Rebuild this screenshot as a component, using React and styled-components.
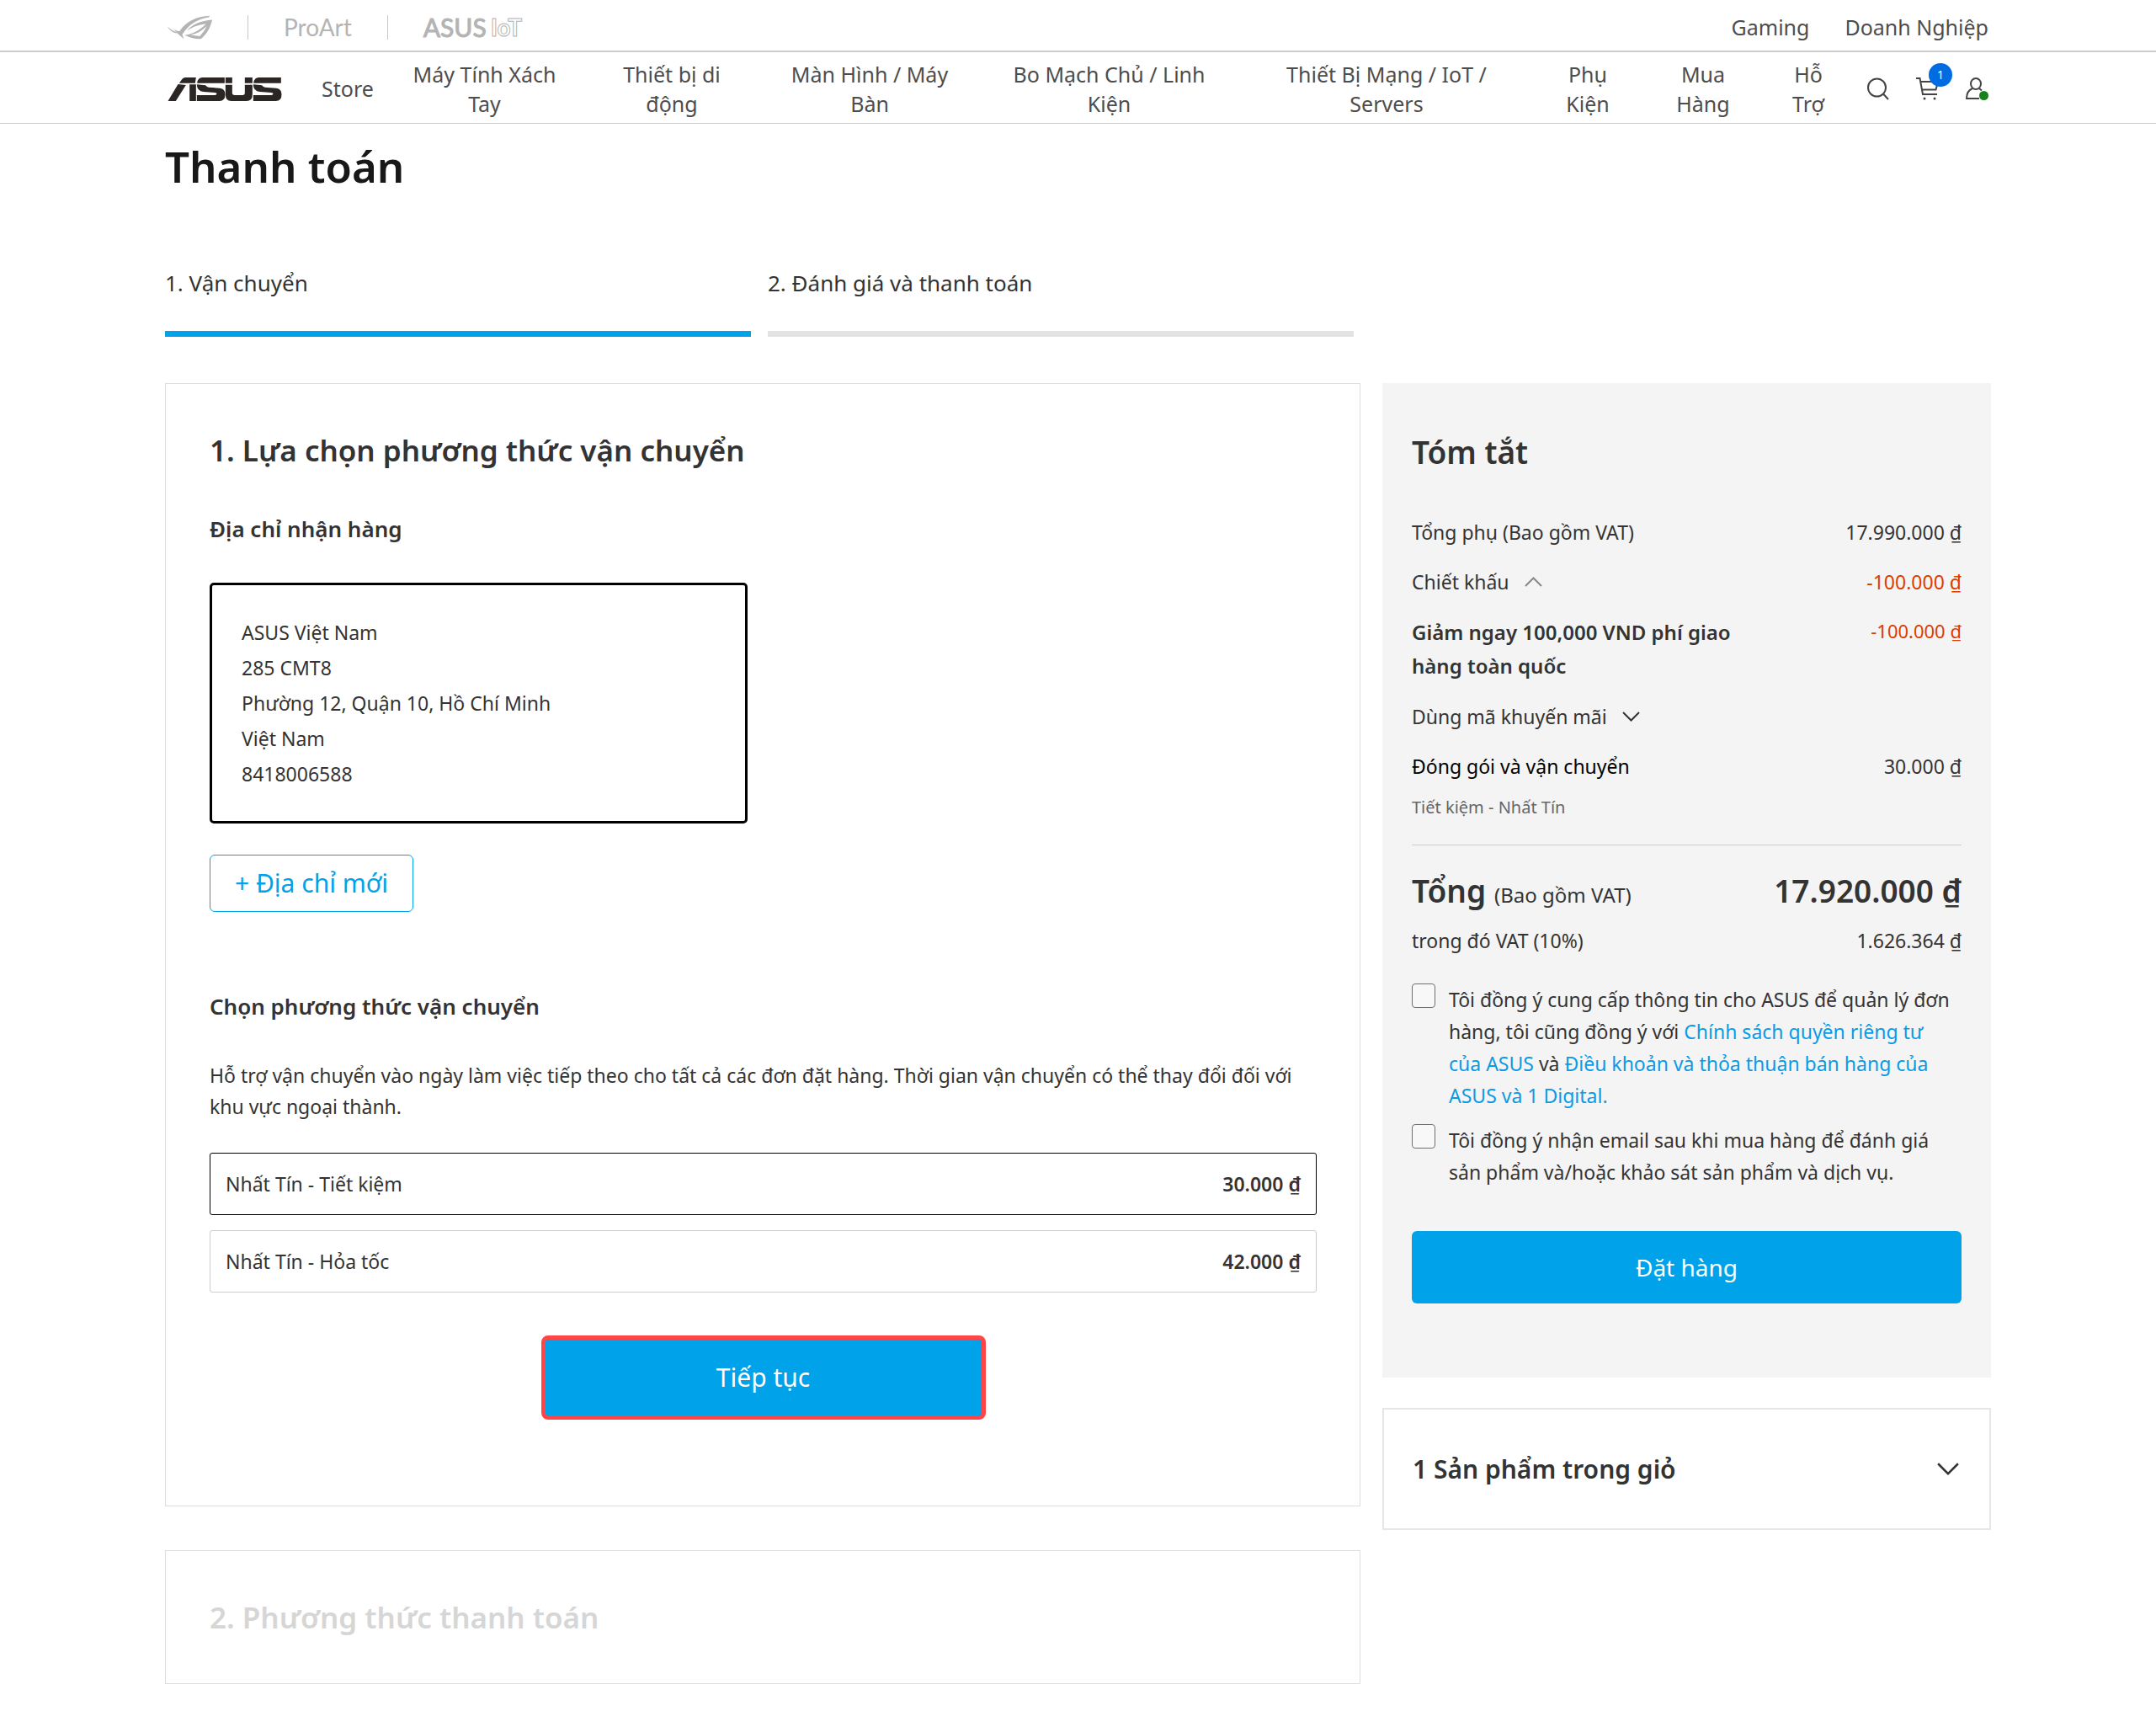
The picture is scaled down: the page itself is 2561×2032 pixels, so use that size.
import React, { useState } from "react";
import styled, { createGlobalStyle } from "styled-components";

const Global = createGlobalStyle`
  *, *::before, *::after { box-sizing: border-box; }
  body { margin: 0; background: #fff; color: #333; font: 400 23px/38px "Noto Sans", "Open Sans", sans-serif; }
  h1, h2, h3, p { margin: 0; font-weight: 600; }
  button, input { font: inherit; color: inherit; margin: 0; }
  button { cursor: pointer; }
  a { text-decoration: none; color: inherit; }
`;

const Inner = styled.div`
  margin: 0 196px;
`;

/* ---------- header ---------- */

const TopBar = styled.div`
  border-bottom: 2px solid #ccc;
`;

const TopRow = styled(Inner)`
  display: flex;
  align-items: center;
  justify-content: space-between;
  height: 60px;
  padding: 4px 3px 0;
`;

const Brands = styled.div`
  display: flex;
  align-items: center;
  gap: 42px;
  color: #b4b4b4;
`;

const BrandLink = styled.a`
  display: flex;
  align-items: center;
  gap: 5px;
  font: 400 ${(p) => p.$size || 28}px/36px Lato, "Noto Sans", sans-serif;
  -webkit-text-stroke: ${(p) => (p.$heavy ? "1px #b4b4b4" : "0")};
`;

const Outlined = styled.span`
  font-size: 28px;
  font-weight: 700;
  color: #fff;
`;

const BrandRule = styled.span`
  width: 1px;
  height: 29px;
  background: #c8c8c8;
`;

const TopLinks = styled.nav`
  display: flex;
  gap: 42px;
  font-size: 25px;
  color: #4d4d4d;
`;

const NavBar = styled.header`
  border-bottom: 1px solid #ccc;
`;

const NavRow = styled(Inner)`
  display: flex;
  align-items: center;
  height: 84px;
  padding: 3px 3px 0;
`;

const NavGrid = styled.nav`
  flex: 1;
  display: grid;
  grid-template-columns: 108fr 217fr 228fr 242fr 327fr 332fr 146fr 128fr 122fr;
  align-items: center;
  margin: 0 9px 0 23px;
`;

const NavLink = styled.a`
  font-size: 25px;
  line-height: 35px;
  text-align: center;
  white-space: pre-line;
  color: #4d4d4d;
`;

const Tools = styled.div`
  display: flex;
  gap: 32px;
  color: #444;
`;

const ToolButton = styled.button`
  position: relative;
  display: flex;
  padding: 0;
  border: 0;
  background: none;
`;

const Badge = styled.span`
  position: absolute;
  top: -17px;
  right: -16px;
  width: 28px;
  height: 28px;
  border-radius: 50%;
  background: #006ce1;
  color: #fff;
  font-size: 14px;
  line-height: 28px;
  text-align: center;
`;

const Online = styled.span`
  position: absolute;
  right: 0;
  bottom: 0;
  width: 11px;
  height: 11px;
  border-radius: 50%;
  background: #17811b;
`;

/* ---------- page ---------- */

const Title = styled.h1`
  padding-top: 14px;
  font-size: 51px;
  line-height: 72px;
  color: #181818;
`;

const Columns = styled.div`
  display: grid;
  grid-template-columns: 1420fr 723fr;
  gap: 26px;
  align-items: start;
`;

const Steps = styled.ol`
  display: grid;
  grid-template-columns: 1fr 1fr;
  gap: 20px;
  list-style: none;
  margin: 83px 8px 55px 0;
  padding: 0;
`;

const Step = styled.li`
  padding-bottom: 37px;
  border-bottom: 7px solid ${(p) => (p.$active ? "#00a2e9" : "#e3e3e3")};
  font-size: 26px;
  line-height: 40px;
`;

const Panel = styled.section`
  border: 1px solid #ddd;
  padding: 53px 51px ${(p) => (p.$muted ? 52 : 102)}px 52px;
  margin-bottom: 52px;
`;

const PanelTitle = styled.h2`
  font-size: ${(p) => (p.$large ? 37 : 35)}px;
  line-height: 52px;
  color: ${(p) => (p.$muted ? "#d6d6d6" : "#333")};
`;

const SubTitle = styled.h3`
  margin: ${(p) => p.$top}px 0 44px;
  font-size: 26px;
  line-height: 40px;
`;

const AddressCard = styled.address`
  width: 639px;
  max-width: 100%;
  padding: 35px;
  border: 3px solid #000;
  border-radius: 5px;
  font-style: normal;
  line-height: 42px;
`;

const OutlineButton = styled.button`
  display: block;
  height: 68px;
  margin-top: 37px;
  padding: 0 29px;
  border: 1px solid #00a2e9;
  border-radius: 6px;
  background: #fff;
  color: #00a2e9;
  font-size: 30px;
`;

const Note = styled.p`
  font-weight: 400;
  line-height: 37px;
`;

const Options = styled.div`
  display: grid;
  gap: 18px;
  margin: 36px 0 51px;
`;

const Option = styled.label`
  display: flex;
  align-items: center;
  justify-content: space-between;
  height: 74px;
  padding: 0 18px;
  border: 1px solid #ccc;
  border-radius: 3px;
  cursor: pointer;
  &:has(input:checked) { border-color: #000; }
`;

const HiddenRadio = styled.input`
  appearance: none;
  position: absolute;
  width: 1px;
  height: 1px;
  opacity: 0;
`;

const Strong = styled.strong`
  font-weight: 600;
`;

const PrimaryButton = styled.button`
  display: block;
  width: ${(p) => p.$width || "100%"};
  height: ${(p) => (p.$marked ? 100 : 86)}px;
  margin: 0 auto;
  border: ${(p) => (p.$marked ? "5px solid #ff4545" : "0")};
  border-radius: ${(p) => (p.$marked ? 8 : 6)}px;
  background: #00a2e9;
  color: #fff;
  font-size: ${(p) => (p.$marked ? 30 : 28)}px;
`;

/* ---------- summary ---------- */

const Summary = styled.section`
  padding: 56px 35px 88px;
  background: #f4f4f4;
`;

const SummaryRows = styled.div`
  display: grid;
  gap: 21px;
  margin-top: 50px;
`;

const Row = styled.div`
  display: flex;
  justify-content: space-between;
  align-items: flex-start;
  margin-top: ${(p) => p.$top || 0}px;
  color: ${(p) => p.$color || "#333"};
`;

const Discount = styled.span`
  color: #dd3c00;
  font-size: ${(p) => (p.$small ? 22 : 23)}px;
  line-height: ${(p) => (p.$small ? 36 : 38)}px;
`;

const Amount = styled.span`
  color: #333;
`;

const Promo = styled.strong`
  width: 400px;
  font-size: 24px;
  line-height: 40px;
  font-weight: 600;
`;

const Toggle = styled.button`
  display: flex;
  align-items: center;
  gap: 18px;
  padding: 0;
  border: 0;
  background: none;
`;

const Carrier = styled.div`
  margin: 14px 0 28px;
  font-size: 20px;
  line-height: 32px;
  color: #666;
`;

const Rule = styled.hr`
  margin: 0;
  border: 0;
  border-top: 1px solid #ccc;
`;

const Total = styled.span`
  font-size: 37px;
  line-height: 52px;
  font-weight: 600;
`;

const TotalNote = styled.small`
  margin-left: 10px;
  font-size: 24px;
  line-height: 38px;
  font-weight: 400;
`;

const Consents = styled.div`
  display: grid;
  gap: 15px;
  margin: 32px 0 51px;
`;

const Consent = styled.div`
  display: flex;
  align-items: flex-start;
  gap: 16px;
  padding-right: 8px;
`;

const Check = styled.input`
  appearance: none;
  flex: none;
  width: 28px;
  height: 29px;
  border: 1px solid #6e6e6e;
  border-radius: 4px;
  background: #f8f8f8;
  &:checked { background: #00a2e9; }
`;

const Link = styled.a`
  color: #0a9be6;
`;

const CartToggle = styled.button`
  display: flex;
  align-items: center;
  justify-content: space-between;
  width: 100%;
  height: 145px;
  margin-top: 36px;
  padding: 0 35px 0 34px;
  border: 2px solid #e6e6e6;
  background: #fff;
  font-size: 30px;
  font-weight: 600;
`;

/* ---------- drawings ---------- */

const Chevron = ({ up, width = 21, height = 12, color = "#333" }) => (
  <svg width={width} height={height} viewBox="0 0 21 12" fill="none" stroke={color} strokeWidth="2">
    <path d={up ? "M1 11 L10.5 1.5 L20 11" : "M1 1 L10.5 10.5 L20 1"} />
  </svg>
);

const RogMark = () => (
  <svg width="53" height="29" viewBox="0 0 158 86" fill="#b4b4b4" role="img" aria-label="ROG">
    <path d="M0 39 C8 48 18 55 30 59 L34 64 C20 62 6 53 0 39Z" />
    <path d="M20 46 C26 52 33 56 42 57 C64 24 102 3 150 2 L146 7 C104 14 74 34 52 68 L58 84 C48 76 30 60 20 46Z" />
    <path d="M68 55 C88 32 118 19 158 16 C152 44 138 68 118 84 C98 85 78 80 60 70 C88 68 116 52 136 30 C108 34 86 42 68 55Z" />
    <path d="M82 70 L114 74 C126 62 134 50 139 38 C124 54 104 66 82 70Z" fill="#fff" />
  </svg>
);

const AsusMark = () => {
  const s = (x) =>
    `M${x + 99} 0 H${x + 20} Q${x + 3} 0 ${x + 1} 20 H${x + 99}Z ` +
    `M${x} 25 L${x + 31} 28 Q${x + 34} 34 ${x + 42} 35 L${x + 82} 38 Q${x + 101} 41 ${x + 101} 60 Q${x + 101} 84 ${x + 80} 84 H${x} V63 H${x + 64} Q${x + 71} 63 ${x + 71} 58 Q${x + 71} 55 ${x + 64} 54 L${x + 24} 51 Q${x} 49 ${x} 25Z`;
  return (
    <svg width="137" height="28" viewBox="0 0 408 84" fill="#2b2624" role="img" aria-label="ASUS">
      <path d="M40 20 L51 5 Q55 0 62 0 H100 L97 20Z M36 24 L64 27 L28 84 H0Z M77 25 H100 V84 H77Z" />
      <path d={s(103)} />
      <path d="M205 0 H229 V20 H205Z M205 26 H229 V55 Q229 63 238 63 H266 Q274 63 274 55 V26 H301 V60 Q301 84 280 84 H226 Q205 84 205 60Z M274 0 H301 V20 H274Z" />
      <path d={s(304)} />
    </svg>
  );
};

const SearchIcon = () => (
  <svg width="26" height="27" viewBox="0 0 26 27" fill="none" stroke="currentColor" strokeWidth="2">
    <circle cx="11.5" cy="12" r="10.5" />
    <path d="M19 19.5 L25 26" />
  </svg>
);

const CartIcon = () => (
  <svg width="27" height="27" viewBox="0 0 27 27" fill="none" stroke="currentColor" strokeWidth="2">
    <path d="M0 1 H4.5 L8 20 H25 M5.5 5 H26 L23.5 14.5 H7" />
    <circle cx="10" cy="25" r="1.5" fill="currentColor" stroke="none" />
    <circle cx="22" cy="25" r="1.5" fill="currentColor" stroke="none" />
  </svg>
);

const UserIcon = () => (
  <svg width="27" height="27" viewBox="0 0 27 27" fill="none" stroke="currentColor" strokeWidth="2">
    <ellipse cx="12" cy="7.5" rx="6" ry="6.5" />
    <path d="M8 13 C3 15 1 19 1 25 H16 M16 13 L19 15.5" />
  </svg>
);

/* ---------- data ---------- */

const navItems = [
  "Store",
  "Máy Tính Xách\nTay",
  "Thiết bị di\nđộng",
  "Màn Hình / Máy\nBàn",
  "Bo Mạch Chủ / Linh\nKiện",
  "Thiết Bị Mạng / IoT /\nServers",
  "Phụ\nKiện",
  "Mua\nHàng",
  "Hỗ\nTrợ",
];

const address = ["ASUS Việt Nam", "285 CMT8", "Phường 12, Quận 10, Hồ Chí Minh", "Việt Nam", "8418006588"];

const shipping = [
  { id: "saver", name: "Nhất Tín - Tiết kiệm", price: "30.000 ₫" },
  { id: "express", name: "Nhất Tín - Hỏa tốc", price: "42.000 ₫" },
];

export default function App() {
  const [method, setMethod] = useState("saver");
  return (
    <>
      <Global />
      <TopBar>
        <TopRow>
          <Brands>
            <BrandLink href="#rog"><RogMark /></BrandLink>
            <BrandRule />
            <BrandLink href="#proart">ProArt</BrandLink>
            <BrandRule />
            <BrandLink href="#iot" $size={30} $heavy>ASUS<Outlined>IoT</Outlined></BrandLink>
          </Brands>
          <TopLinks>
            <a href="#gaming">Gaming</a>
            <a href="#business">Doanh Nghiệp</a>
          </TopLinks>
        </TopRow>
      </TopBar>
      <NavBar>
        <NavRow>
          <BrandLink href="#home"><AsusMark /></BrandLink>
          <NavGrid>
            {navItems.map((item) => (
              <NavLink key={item} href="#nav">{item}</NavLink>
            ))}
          </NavGrid>
          <Tools>
            <ToolButton aria-label="Tìm kiếm"><SearchIcon /></ToolButton>
            <ToolButton aria-label="Giỏ hàng"><CartIcon /><Badge>1</Badge></ToolButton>
            <ToolButton aria-label="Tài khoản"><UserIcon /><Online /></ToolButton>
          </Tools>
        </NavRow>
      </NavBar>

      <Inner as="main">
        <Title>Thanh toán</Title>
        <Columns>
          <Steps>
            <Step $active>1. Vận chuyển</Step>
            <Step>2. Đánh giá và thanh toán</Step>
          </Steps>
        </Columns>
        <Columns>
          <div>
            <Panel>
              <PanelTitle>1. Lựa chọn phương thức vận chuyển</PanelTitle>
              <SubTitle $top={47}>Địa chỉ nhận hàng</SubTitle>
              <AddressCard>
                {address.map((line) => <div key={line}>{line}</div>)}
              </AddressCard>
              <OutlineButton>+ Địa chỉ mới</OutlineButton>
              <SubTitle $top={92}>Chọn phương thức vận chuyển</SubTitle>
              <Note>
                Hỗ trợ vận chuyển vào ngày làm việc tiếp theo cho tất cả các đơn đặt hàng. Thời gian vận chuyển có thể thay đổi đối với khu vực ngoại thành.
              </Note>
              <Options>
                {shipping.map((s) => (
                  <Option key={s.id}>
                    <HiddenRadio type="radio" name="shipping" checked={method === s.id} onChange={() => setMethod(s.id)} />
                    <span>{s.name}</span>
                    <Strong>{s.price}</Strong>
                  </Option>
                ))}
              </Options>
              <PrimaryButton $marked $width="528px">Tiếp tục</PrimaryButton>
            </Panel>
            <Panel $muted>
              <PanelTitle $muted>2. Phương thức thanh toán</PanelTitle>
            </Panel>
          </div>

          <aside>
            <Summary>
              <PanelTitle $large>Tóm tắt</PanelTitle>
              <SummaryRows>
                <Row><span>Tổng phụ (Bao gồm VAT)</span><Amount>17.990.000 ₫</Amount></Row>
                <Row>
                  <Toggle>Chiết khấu <Chevron up color="#888" /></Toggle>
                  <Discount>-100.000 ₫</Discount>
                </Row>
                <Row>
                  <Promo>Giảm ngay 100,000 VND phí giao hàng toàn quốc</Promo>
                  <Discount $small>-100.000 ₫</Discount>
                </Row>
                <Row><Toggle>Dùng mã khuyến mãi <Chevron /></Toggle></Row>
                <Row $color="#000"><span>Đóng gói và vận chuyển</span><Amount>30.000 ₫</Amount></Row>
              </SummaryRows>
              <Carrier>Tiết kiệm - Nhất Tín</Carrier>
              <Rule />
              <Row $top={28}>
                <Total>Tổng<TotalNote>(Bao gồm VAT)</TotalNote></Total>
                <Total>17.920.000 ₫</Total>
              </Row>
              <Row $top={14}><span>trong đó VAT (10%)</span><Amount>1.626.364 ₫</Amount></Row>
              <Consents>
                <Consent>
                  <Check type="checkbox" id="terms" />
                  <label htmlFor="terms">
                    Tôi đồng ý cung cấp thông tin cho ASUS để quản lý đơn hàng, tôi cũng đồng ý với <Link href="#privacy">Chính sách quyền riêng tư của ASUS</Link> và <Link href="#terms-of-sale">Điều khoản và thỏa thuận bán hàng của ASUS và 1 Digital.</Link>
                  </label>
                </Consent>
                <Consent>
                  <Check type="checkbox" id="email" />
                  <label htmlFor="email">
                    Tôi đồng ý nhận email sau khi mua hàng để đánh giá sản phẩm và/hoặc khảo sát sản phẩm và dịch vụ.
                  </label>
                </Consent>
              </Consents>
              <PrimaryButton>Đặt hàng</PrimaryButton>
            </Summary>
            <CartToggle>
              1 Sản phẩm trong giỏ
              <Chevron width={28} height={15} />
            </CartToggle>
          </aside>
        </Columns>
      </Inner>
    </>
  );
}
